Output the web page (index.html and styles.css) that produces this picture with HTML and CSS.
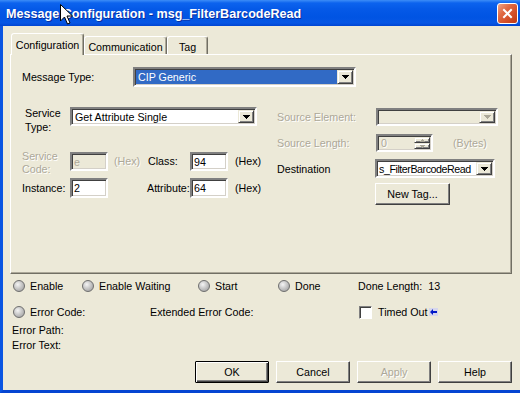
FILE: index.html
```html
<!DOCTYPE html>
<html>
<head>
<meta charset="utf-8">
<link rel="stylesheet" href="styles.css">
</head>
<body>
<div class="window">
  <div class="titlebar">
    <span class="title">Message Configuration - msg_FilterBarcodeRead</span>
    <span class="close"><svg width="13" height="13" viewBox="0 0 13 13"><path d="M3 3L10 10M10 3L3 10" stroke="#fff" stroke-width="2" stroke-linecap="square"/></svg></span>
    <svg class="cursor" width="13" height="21" viewBox="0 0 13 21"><path d="M0.5 0.5V17L4.5 13L7.5 20L10 19L7 12H12.5Z" fill="#fff" stroke="#000" stroke-width="1"/></svg>
  </div>
  <div class="frame">
    <div class="tabs">
      <div class="tab active">Configuration</div>
      <div class="tab comm">Communication</div>
      <div class="tab tagt">Tag</div>
    </div>
    <div class="panel">
      <div class="r-msg">
        <span class="lbl c-msg">Message Type:</span>
        <div class="combo focus w-msg"><span class="val">CIP Generic</span><span class="drop"><svg width="7" height="4" viewBox="0 0 7 4"><path d="M0 0H7V1H6V2H5V3H4V4H3V3H2V2H1V1H0Z" fill="#000"/></svg></span></div>
      </div>
      <div class="cols">
        <div class="col-l">
          <div class="r-st">
            <div class="lbl c-st">Service<br>Type:</div>
            <div class="combo w-st"><span class="val">Get Attribute Single</span><span class="drop"><svg width="7" height="4" viewBox="0 0 7 4"><path d="M0 0H7V1H6V2H5V3H4V4H3V3H2V2H1V1H0Z" fill="#000"/></svg></span></div>
          </div>
          <div class="r-sc">
            <div class="lbl c-sc dis">Service<br>Code:</div>
            <div class="field disabled w-num">e</div>
            <span class="hexcell c-hex1 dis">(Hex)</span>
            <span class="hexcell c-class">Class:</span>
            <div class="field w-num">94</div>
            <span class="hexcell c-hex2">(Hex)</span>
          </div>
          <div class="r-in">
            <span class="lbl c-in">Instance:</span>
            <div class="field w-num h20">2</div>
            <span class="c-sp"></span>
            <span class="lbl c-attr">Attribute:</span>
            <div class="field w-num h20">64</div>
            <span class="c-hex2">(Hex)</span>
          </div>
        </div>
        <div class="col-r">
          <div class="rr rr1">
            <span class="lbl c-rl dis">Source Element:</span>
            <div class="combo off w-se"><span class="val"></span><span class="drop"><svg width="7" height="4" viewBox="0 0 7 4"><path d="M0 0H7V1H6V2H5V3H4V4H3V3H2V2H1V1H0Z" fill="#ACA899"/></svg></span></div>
          </div>
          <div class="rr rr2">
            <span class="lbl c-rl dis">Source Length:</span>
            <div class="combo off w-sl"><span class="val dis">0</span><span class="ud"><span class="udb"><svg width="5" height="3" viewBox="0 0 5 3"><path d="M2 0H3V1H4V2H5V3H0V2H1V1H2Z" fill="#ACA899"/></svg></span><span class="udb"><svg width="5" height="3" viewBox="0 0 5 3"><path d="M0 0H5V1H4V2H3V3H2V2H1V1H0Z" fill="#ACA899"/></svg></span></span></div>
            <span class="bytes dis">(Bytes)</span>
          </div>
          <div class="rr rr3">
            <span class="lbl c-dest">Destination</span>
            <div class="combo w-dest"><span class="val tight">s_FilterBarcodeRead</span><span class="drop"><svg width="7" height="4" viewBox="0 0 7 4"><path d="M0 0H7V1H6V2H5V3H4V4H3V3H2V2H1V1H0Z" fill="#000"/></svg></span></div>
          </div>
          <div class="rr4">
            <div class="btn btn-new">New Tag...</div>
          </div>
        </div>
      </div>
    </div>
    <div class="status">
      <div class="srow">
        <div class="item w69"><span class="led"></span><span>Enable</span></div>
        <div class="item w116"><span class="led"></span><span>Enable Waiting</span></div>
        <div class="item w80"><span class="led"></span><span>Start</span></div>
        <div class="item w80"><span class="led"></span><span>Done</span></div>
        <div class="item"><span>Done Length:</span><span class="num">13</span></div>
      </div>
      <div class="srow srow2">
        <div class="item w137"><span class="led"></span><span>Error Code:</span></div>
        <div class="item w208"><span>Extended Error Code:</span></div>
        <div class="item chk-item"><span class="chk"></span><span>Timed Out</span><svg class="arrow" width="9" height="8" viewBox="0 0 9 8"><rect width="9" height="8" fill="#D6D6EC"/><path d="M1 4L4 1V3H8V5H4V7Z" fill="#0018C8"/></svg></div>
      </div>
      <div class="srow srow3"><span>Error Path:</span></div>
      <div class="srow srow4"><span>Error Text:</span></div>
    </div>
    <div class="buttons">
      <div class="btn default">OK</div>
      <div class="btn">Cancel</div>
      <div class="btn disbtn">Apply</div>
      <div class="btn">Help</div>
    </div>
  </div>
</div>
</body>
</html>
```
FILE: styles.css
```css
* { box-sizing: border-box; }
body {
  margin: 0;
  font-family: "Liberation Sans", Arial, sans-serif;
  font-size: 10.7px;
  color: #000;
  background: #fff;
}
.window {
  width: 520px;
  height: 393px;
  display: flex;
  flex-direction: column;
  background: #ECE9D8;
  overflow: hidden;
}
.titlebar {
  height: 26px;
  flex: none;
  display: flex;
  align-items: center;
  justify-content: space-between;
  padding: 0 2px 0 6px;
  position: relative;
  background: linear-gradient(180deg, #3D8DF7 0, #0C63EE 3px, #0559E7 35%, #0054E3 65%, #0656E4 88%, #0045D2 100%);
}
.title {
  color: #fff;
  font-weight: bold;
  font-size: 12.6px;
  padding-top: 1px;
  white-space: nowrap;
  text-shadow: 1px 1px 0 #0A2D9C;
}
.close {
  width: 21px;
  height: 21px;
  border: 1px solid #fff;
  border-radius: 3px;
  display: flex;
  align-items: center;
  justify-content: center;
  background: linear-gradient(135deg, #EFA488 0%, #E06A44 35%, #D4502A 65%, #C03A14 100%);
}
.cursor { position: absolute; left: 60px; top: 4px; }
.frame {
  flex: 1;
  display: flex;
  flex-direction: column;
  border-left: 3px solid #0A55E2;
  border-bottom: 3px solid #0545D2;
}
.tabs {
  display: flex;
  align-items: flex-end;
  height: 21px;
  margin: 7px 0 0 8px;
}
.tab {
  height: 18px;
  border: 1px solid;
  border-bottom: 0;
  border-color: #FFF #716F64 transparent #FFF;
  box-shadow: inset -1px 0 #ACA899;
  border-radius: 3px 3px 0 0;
  display: flex;
  align-items: center;
  justify-content: center;
  padding-top: 2px;
  background: #ECE9D8;
  white-space: nowrap;
}
.tab.active {
  width: 73px;
  height: 22px;
  margin-bottom: -1px;
  padding-top: 0;
  position: relative;
  z-index: 1;
}
.tab.comm { width: 83px; }
.tab.tagt { width: 41px; }
.panel {
  margin: 0 8px 0 7px;
  height: 220px;
  border: 1px solid;
  border-color: #FFF #716F64 #716F64 #FFF;
  box-shadow: inset -1px -1px #ACA899;
  padding: 12px 0 0 11px;
}
.lbl { white-space: nowrap; }
.dis { color: #ACA899; text-shadow: 1px 1px 0 #fff; }
.r-msg { display: flex; align-items: center; height: 20px; }
.c-msg { width: 111px; }
.w-msg { width: 223px; height: 20px; }

.field, .combo {
  border: 2px solid;
  border-color: #808080 #FFF #FFF #808080;
  box-shadow: inset 1px 1px #404040, inset -1px -1px #D4D0C8;
  background: #fff;
  display: flex;
  align-items: center;
  flex: none;
}
.field { padding-left: 2px; }
.field.disabled { background: #ECE9D8; color: #ACA899; }
.combo .val {
  flex: 1;
  align-self: stretch;
  display: flex;
  align-items: center;
  padding-left: 2px;
  margin: 1px 0 1px 1px;
  white-space: nowrap;
  overflow: hidden;
}
.combo .val.tight { letter-spacing: -0.45px; padding-left: 1px; }
.combo.focus .val { background: #316AC5; color: #fff; margin: 1px 0 1px 1px; }
.combo .drop, .udb {
  width: 16px;
  flex: none;
  align-self: stretch;
  margin: 1px 1px 1px 0;
  background: #ECE9D8;
  border: 1px solid;
  border-color: #ECE9D8 #404040 #404040 #ECE9D8;
  box-shadow: inset 1px 1px #fff, inset -1px -1px #808080;
  display: flex;
  align-items: center;
  justify-content: center;
}
.combo.off { background: #ECE9D8; }
.ud { display: flex; flex-direction: column; align-self: stretch; margin: 1px 1px 1px 0; }
.ud .udb { flex: 1; margin: 0; }

.cols { display: flex; margin-top: 19px; }
.col-l { width: 255px; flex: none; }
.r-st { display: flex; align-items: flex-start; height: 28px; }
.c-st { width: 48px; padding-left: 3px; line-height: 14px; }
.w-st { width: 187px; height: 19px; margin-top: 1px; }
.r-sc { display: flex; align-items: flex-start; height: 26px; margin-top: 16px; }
.c-sc { width: 48px; line-height: 13px; }
.r-sc .field { margin-top: 2px; }
.hexcell { height: 19px; line-height: 19px; margin-top: 2px; white-space: nowrap; }
.c-hex1 { width: 40px; padding-left: 6px; flex: none; }
.c-class { width: 42px; flex: none; }
.c-hex2 { padding-left: 7px; white-space: nowrap; }
.r-in { display: flex; align-items: center; height: 20px; margin-top: 2px; }
.c-in { width: 48px; flex: none; }
.c-sp { width: 39px; flex: none; }
.c-attr { width: 43px; flex: none; }
.w-num { width: 38px; height: 19px; }
.w-num.h20 { height: 20px; }

.col-r { padding-top: 2px; }
.rr { display: flex; align-items: center; }
.rr1 { height: 18px; }
.c-rl { width: 99px; flex: none; }
.w-se { width: 122px; height: 18px; }
.rr2 { height: 18px; margin-top: 8px; }
.w-sl { width: 57px; height: 18px; }
.bytes { margin-left: 20px; }
.rr3 { height: 19px; margin-top: 7px; }
.c-dest { width: 98px; flex: none; }
.w-dest { width: 120px; height: 19px; }
.rr4 { margin-top: 5px; padding-left: 98px; }

.btn {
  width: 74px;
  height: 22px;
  flex: none;
  border: 1px solid;
  border-color: #FFF #404040 #404040 #FFF;
  box-shadow: inset -1px -1px #808080;
  border-radius: 1px;
  background: #ECE9D8;
  display: flex;
  align-items: center;
  justify-content: center;
}
.btn-new { width: 75px; }
.btn.default {
  border-color: #000;
  box-shadow: inset 1px 1px #fff, inset -1px -1px #404040, inset -2px -2px #808080;
}
.btn.disbtn { color: #ACA899; text-shadow: 1px 1px 0 #fff; }

.status { padding-left: 10px; margin-top: 4px; }
.srow { display: flex; align-items: center; height: 16px; white-space: nowrap; }
.srow2 { margin-top: 10px; }
.srow3 { height: 14px; margin-top: 3px; margin-left: -1px; }
.srow4 { height: 14px; margin-top: 1px; margin-left: -1px; }
.item { display: flex; align-items: center; gap: 5px; flex: none; }
.w69 { width: 69px; }
.w116 { width: 116px; }
.w80 { width: 80px; }
.w137 { width: 137px; }
.w208 { width: 208px; }
.num { margin-left: 1px; }
.led {
  width: 12px;
  height: 12px;
  border-radius: 50%;
  border: 1px solid #6E6E6E;
  background: radial-gradient(circle at 38% 35%, #F4F4F4 0, #C8C8C8 45%, #969696 100%);
}
.chk-item { margin-left: 1px; gap: 6px; }
.chk {
  width: 13px;
  height: 13px;
  background: #fff;
  border: 1px solid;
  border-color: #808080 #FFF #FFF #808080;
  box-shadow: inset 1px 1px #404040;
}
.arrow { margin-left: -5px; }

.buttons {
  display: flex;
  justify-content: flex-end;
  gap: 7px;
  padding-right: 8px;
  margin-top: 9px;
}
```
